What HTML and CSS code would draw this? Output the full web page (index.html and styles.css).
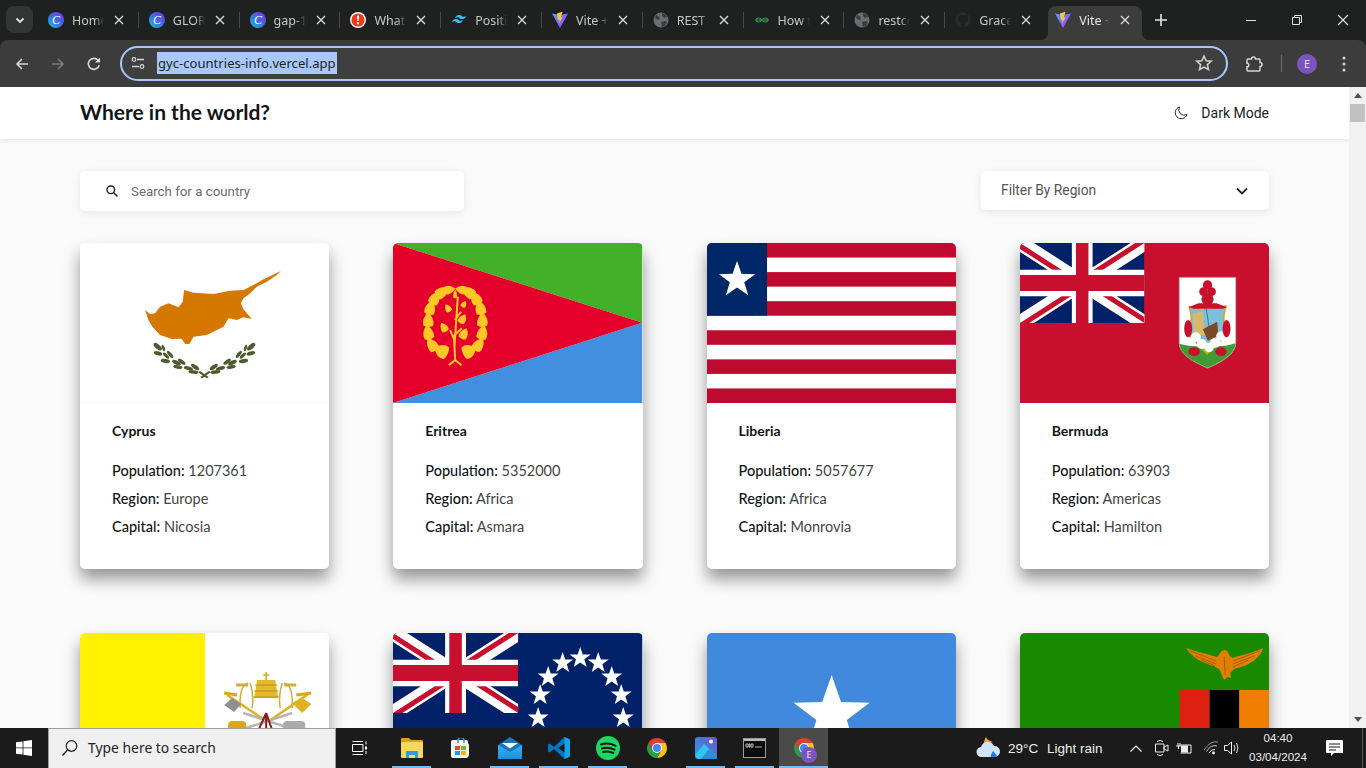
FILE: index.html
```html
<!DOCTYPE html>
<html lang="en">

  <head>
    <meta charset="UTF-8">
    <meta name="viewport" content="width=device-width, initial-scale=1.0">
    <title>Where in the world?</title>
    <link rel="stylesheet" href="styles.css">
  </head>

  <body>
    <svg class="icon-defs" aria-hidden="true">
      <defs>
        <linearGradient id="canvaFill" x1="0" y1="1" x2="1" y2="0">
          <stop offset="0" stop-color="#18c4d8" />
          <stop offset="0.5" stop-color="#3d6ee6" />
          <stop offset="1" stop-color="#7d2ae8" />
        </linearGradient>
        <linearGradient id="viteFill" x1="0" y1="0" x2="1" y2="1">
          <stop offset="0" stop-color="#41a5ff" />
          <stop offset="1" stop-color="#bd34fe" />
        </linearGradient>
        <linearGradient id="bluefold" x1="0" y1="0" x2="0" y2="1">
          <stop offset="0" stop-color="#35b5f5" />
          <stop offset="1" stop-color="#1a8fe3" />
        </linearGradient>
        <linearGradient id="photoFill" x1="0" y1="1" x2="1" y2="0">
          <stop offset="0" stop-color="#2f9fe8" />
          <stop offset="1" stop-color="#6a55c8" />
        </linearGradient>
        <clipPath id="jackClip">
          <path d="M30 15h30v15zv15H0zH0V0zV0h30z" />
        </clipPath>
        <symbol id="canva" viewBox="0 0 16 16">
          <circle cx="8" cy="8" r="8" fill="url(#canvaFill)" />
          <text x="8" y="12" text-anchor="middle" class="canva-letter">C</text>
        </symbol>
        <symbol id="vite" viewBox="0 0 16 16">
          <path d="M0 1.500 8 3l8-1.500-8 14.500z" fill="url(#viteFill)" />
          <path d="M9.500 0 5 1.500l.8 6.500 1.700-.5-.3 3.500 3.300-5.500-1.800.3L10.500 0z" fill="#ffc925" />
        </symbol>
        <symbol id="globe" viewBox="0 0 16 16">
          <circle cx="8" cy="8" r="7.500" fill="#6a6e73" />
          <path d="M3 3l3 1.500 1 2.500-2 1-3-2zM9 1l4 1.500 1 2.500-3 1-2-2zM8 10l4-1 2 1-2 4-3 1z" fill="#3a3c3f" />
        </symbol>
        <symbol id="close" viewBox="0 0 10 10">
          <path d="M1 1l8 8M9 1 1 9" stroke="#d8d8d8" stroke-width="1.400" fill="none" />
        </symbol>
        <symbol id="jack" viewBox="0 0 60 30" preserveAspectRatio="none">
          <rect width="60" height="30" fill="#012169" />
          <path d="M0 0 60 30M60 0 0 30" stroke="#fff" stroke-width="6" />
          <path d="M0 0 60 30M60 0 0 30" clip-path="url(#jackClip)" stroke="#c8102e" stroke-width="4" />
          <path d="M30 0v30M0 15h60" stroke="#fff" stroke-width="10" />
          <path d="M30 0v30M0 15h60" stroke="#c8102e" stroke-width="6" />
        </symbol>
        <symbol id="chrome" viewBox="0 0 24 24">
          <path d="M3.340 7A10 10 0 0 1 20.660 7H12L7.670 14.500z" fill="#e33b2e" />
          <path d="M20.660 7A10 10 0 0 1 12 22l4.330-7.500L12 7z" fill="#fbc116" />
          <path d="M12 22A10 10 0 0 1 3.340 7l4.330 7.500 8.660 0z" fill="#2a9d47" />
          <circle cx="12" cy="12" r="5" fill="#fff" />
          <circle cx="12" cy="12" r="4" fill="#4487f0" />
        </symbol>
        <polygon id="star" points="0,-10 2.350,-3.240 9.510,-3.090 3.800,1.240 5.880,8.090 0,4 -5.880,8.090 -3.800,1.240 -9.510,-3.090 -2.350,-3.240" fill="#fff" />
        <path id="wreathLeaf" d="M0-28Q20-10 15 12 0 20-15 12-20-10 0-28z" fill="#ffc726" />
      </defs>
    </svg>

    <div class="tabstrip">
      <button class="tab-search">
        <svg width="12" height="12" viewBox="0 0 12 12"><path d="M2.500 4.500 6 8l3.500-3.500" stroke="#e3e3e3" stroke-width="1.800" fill="none" /></svg>
      </button>
      <div class="tab">
        <svg class="fav"><use href="#canva" /></svg>
        <span class="tab-title">Home</span>
        <svg class="tab-close"><use href="#close" /></svg>
      </div>
      <span class="tab-sep"></span>
      <div class="tab">
        <svg class="fav"><use href="#canva" /></svg>
        <span class="tab-title">GLORY</span>
        <svg class="tab-close"><use href="#close" /></svg>
      </div>
      <span class="tab-sep"></span>
      <div class="tab">
        <svg class="fav"><use href="#canva" /></svg>
        <span class="tab-title">gap-1</span>
        <svg class="tab-close"><use href="#close" /></svg>
      </div>
      <span class="tab-sep"></span>
      <div class="tab">
        <svg class="fav" viewBox="0 0 16 16">
          <circle cx="8" cy="8" r="8" fill="#fff" />
          <circle cx="8" cy="8" r="6.600" fill="#f03a17" />
          <path d="M7 3.500h2l-.3 5.500H7.300zM7 10.300h2v2H7z" fill="#fff" />
        </svg>
        <span class="tab-title">Whats</span>
        <svg class="tab-close"><use href="#close" /></svg>
      </div>
      <span class="tab-sep"></span>
      <div class="tab">
        <svg class="fav" viewBox="0 0 16 16">
          <path d="M4 6.500C5 3.500 6.700 2.500 9 3c1.500.3 2 1.500 3.200 1.800 1 .2 2-.2 3-1.300-1 3-2.700 4-5 3.500C8.700 6.700 8.200 5.500 7 5.200c-1-.2-2 .2-3 1.300zM.8 10.500c1-3 2.700-4 5-3.500 1.500.3 2 1.500 3.200 1.800 1 .2 2-.2 3-1.300-1 3-2.700 4-5 3.500-1.500-.3-2-1.500-3.200-1.800-1-.2-2 .2-3 1.300z" fill="#38bdf8" />
        </svg>
        <span class="tab-title">Position</span>
        <svg class="tab-close"><use href="#close" /></svg>
      </div>
      <span class="tab-sep"></span>
      <div class="tab">
        <svg class="fav"><use href="#vite" /></svg>
        <span class="tab-title">Vite + React</span>
        <svg class="tab-close"><use href="#close" /></svg>
      </div>
      <span class="tab-sep"></span>
      <div class="tab">
        <svg class="fav"><use href="#globe" /></svg>
        <span class="tab-title">REST Countries</span>
        <svg class="tab-close"><use href="#close" /></svg>
      </div>
      <span class="tab-sep"></span>
      <div class="tab">
        <svg class="fav" viewBox="0 0 16 16">
          <path d="M1 8h14M2 8c.5-2 3-2.600 4.500-1.300L8 8l1.500-1.300C11 5.400 13.500 6 14 8c-.5 2-3 2.600-4.500 1.300L8 8 6.500 9.300C5 10.600 2.500 10 2 8z" stroke="#2f8d46" stroke-width="1.100" fill="none" />
        </svg>
        <span class="tab-title">How to</span>
        <svg class="tab-close"><use href="#close" /></svg>
      </div>
      <span class="tab-sep"></span>
      <div class="tab">
        <svg class="fav"><use href="#globe" /></svg>
        <span class="tab-title">restcountries</span>
        <svg class="tab-close"><use href="#close" /></svg>
      </div>
      <span class="tab-sep"></span>
      <div class="tab">
        <svg class="fav" viewBox="0 0 16 16">
          <path d="M8 .5a7.500 7.500 0 0 0-2.400 14.600c.4.100.5-.2.500-.4v-1.400c-2 .4-2.500-.9-2.600-1.300-.1-.2-.5-.9-.8-1-.3-.2-.7-.6 0-.6.600 0 1.100.6 1.200.8.700 1.200 1.900.9 2.300.7.100-.5.300-.9.500-1.100-1.800-.2-3.600-.9-3.600-4 0-.9.300-1.600.8-2.100-.1-.2-.3-1 .1-2.100 0 0 .7-.2 2.200.8a7.500 7.500 0 0 1 4 0c1.500-1 2.200-.8 2.200-.8.400 1.100.2 1.900.1 2.100.5.500.8 1.200.8 2.100 0 3.100-1.900 3.800-3.600 4 .3.300.5.700.5 1.500v2.200c0 .2.100.5.500.4A7.500 7.500 0 0 0 8 .5z" fill="#2a2e33" />
        </svg>
        <span class="tab-title">Grace</span>
        <svg class="tab-close"><use href="#close" /></svg>
      </div>
      <div class="tab tab-active">
        <svg class="fav"><use href="#vite" /></svg>
        <span class="tab-title">Vite + React</span>
        <svg class="tab-close"><use href="#close" /></svg>
      </div>
      <svg class="tab-new" width="14" height="14" viewBox="0 0 14 14"><path d="M7 1v12M1 7h12" stroke="#e3e3e3" stroke-width="1.600" /></svg>
      <div class="win-controls">
        <span class="win-btn"><svg width="12" height="12" viewBox="0 0 12 12"><path d="M1 6.500h10" stroke="#e3e3e3" /></svg></span>
        <span class="win-btn"><svg width="12" height="12" viewBox="0 0 12 12"><path d="M1.500 3.500h7v7h-7zM3.500 3.500v-2h7v7h-2" stroke="#e3e3e3" fill="none" /></svg></span>
        <span class="win-btn"><svg width="12" height="12" viewBox="0 0 12 12"><path d="M1 1l10 10M11 1 1 11" stroke="#e3e3e3" stroke-width="1.100" /></svg></span>
      </div>
    </div>

    <div class="toolbar">
      <span class="tool-btn">
        <svg width="16" height="16" viewBox="0 0 16 16"><path d="M14 8H3M8 3 3 8l5 5" stroke="#d6d6d6" stroke-width="1.600" fill="none" /></svg>
      </span>
      <span class="tool-btn">
        <svg width="16" height="16" viewBox="0 0 16 16"><path d="M2 8h11M8 3l5 5-5 5" stroke="#7b7b7b" stroke-width="1.600" fill="none" /></svg>
      </span>
      <span class="tool-btn">
        <svg width="16" height="16" viewBox="0 0 16 16"><path d="M13.200 9.200A5.500 5.500 0 1 1 12 4.200L13.500 5.600" stroke="#d6d6d6" stroke-width="1.600" fill="none" /><path d="M14 1.500v5H9z" fill="#d6d6d6" /></svg>
      </span>
      <div class="omnibox">
        <svg class="tune-icon" width="14" height="14" viewBox="0 0 14 14">
          <path d="M6 3.500h7M1 10.500h7" stroke="#d6d6d6" stroke-width="1.300" />
          <circle cx="3" cy="3.500" r="1.800" stroke="#d6d6d6" stroke-width="1.200" fill="none" />
          <circle cx="11" cy="10.500" r="1.800" stroke="#d6d6d6" stroke-width="1.200" fill="none" />
        </svg>
        <span class="url-selected">gyc-countries-info.vercel.app</span>
        <svg class="star-icon" width="18" height="18" viewBox="0 0 18 18"><path d="M9 2l2.100 4.700 5.100.5-3.800 3.400 1.100 5L9 13l-4.500 2.600 1.100-5-3.800-3.400 5.100-.5z" stroke="#d6d6d6" stroke-width="1.500" fill="none" /></svg>
      </div>
      <span class="tool-btn ext-btn">
        <svg width="18" height="18" viewBox="0 0 18 18"><path d="M3 4h3.500a2 2 0 0 1 4 0H14a1 1 0 0 1 1 1v2.500a2 2 0 0 1 0 4V15a1 1 0 0 1-1 1H3a1 1 0 0 1-1-1v-3.200a1.800 1.800 0 0 0 0-3.600V5a1 1 0 0 1 1-1z" stroke="#d6d6d6" stroke-width="1.500" fill="none" /></svg>
      </span>
      <span class="tool-divider"></span>
      <span class="tool-btn avatar-btn"><span class="avatar">E</span></span>
      <span class="tool-btn menu-btn">
        <svg width="4" height="16" viewBox="0 0 4 16"><circle cx="2" cy="2" r="1.500" fill="#d6d6d6" /><circle cx="2" cy="8" r="1.500" fill="#d6d6d6" /><circle cx="2" cy="14" r="1.500" fill="#d6d6d6" /></svg>
      </span>
    </div>

    <div class="viewport">
      <div class="page">
        <header class="site-header">
          <h1>Where in the world?</h1>
          <div class="theme-toggle">
            <svg width="14" height="14" viewBox="0 0 14 14"><path d="M5.500 1a6 6 0 1 0 7.500 7.500A5.500 5.500 0 0 1 5.500 1z" stroke="#222" stroke-width="1" fill="none" /></svg>
            <span>Dark Mode</span>
          </div>
        </header>

        <main class="content">
          <div class="controls">
            <div class="search">
              <svg width="14" height="14" viewBox="0 0 14 14"><circle cx="5.800" cy="5.800" r="3.800" stroke="#222" stroke-width="1.400" fill="none" /><path d="M8.700 8.700 12.500 12.500" stroke="#222" stroke-width="1.500" /></svg>
              <span>Search for a country</span>
            </div>
            <div class="filter">
              <span>Filter By Region</span>
              <svg width="12" height="8" viewBox="0 0 12 8"><path d="M1 1.500 6 6.500l5-5" stroke="#222" stroke-width="1.800" fill="none" /></svg>
            </div>
          </div>

          <div class="country-grid">
            <article class="card">
              <svg class="flag" viewBox="0 9 747 480" preserveAspectRatio="none">
                <rect y="9" width="747" height="480" fill="#fff" />
                <rect y="486" width="747" height="3" fill="#fafafa" />
                <path d="M195 210 210 222 225 220 240 200 265 190 295 202 308 185 312 150 340 158 400 162 450 152 490 150 520 135 550 118 602 93 590 105 560 125 530 140 510 160 490 175 482 190 490 208 515 237 490 232 470 240 445 235 430 260 380 285 340 290 328 312 315 312 305 296 275 297 240 285 218 262 205 240z" fill="#d57800" />
                <g id="wreathLeft" fill="#4e5b31">
                  <ellipse cx="233" cy="320" rx="15" ry="7" transform="rotate(40 233 320)" />
                  <ellipse cx="234" cy="340" rx="13" ry="6" transform="rotate(15 234 340)" />
                  <ellipse cx="250" cy="324" rx="10" ry="4" transform="rotate(70 250 324)" />
                  <ellipse cx="258" cy="347" rx="12" ry="5" transform="rotate(45 258 347)" />
                  <ellipse cx="270" cy="343" rx="13" ry="5" transform="rotate(50 270 343)" />
                  <ellipse cx="256" cy="363" rx="14" ry="6" transform="rotate(10 256 363)" />
                  <ellipse cx="289" cy="368" rx="14" ry="6" transform="rotate(25 289 368)" />
                  <ellipse cx="305" cy="365" rx="13" ry="5.500" transform="rotate(35 305 365)" />
                  <ellipse cx="293" cy="381" rx="14" ry="5.500" transform="rotate(8 293 381)" />
                  <ellipse cx="325" cy="385" rx="14" ry="5.500" transform="rotate(15 325 385)" />
                  <ellipse cx="345" cy="381" rx="14" ry="6" transform="rotate(35 345 381)" />
                  <ellipse cx="340" cy="396" rx="15" ry="5.500" transform="rotate(5 340 396)" />
                  <path d="M360 393 386 412 380 415 354 397z" />
                </g>
                <use href="#wreathLeft" transform="translate(746 0) scale(-1 1)" />
              </svg>
              <div class="card-body">
                <h2>Cyprus</h2>
                <p><b>Population:</b> 1207361</p>
                <p><b>Region:</b> Europe</p>
                <p><b>Capital:</b> Nicosia</p>
              </div>
            </article>

            <article class="card">
              <svg class="flag" viewBox="0 9 750 480" preserveAspectRatio="none">
                <path d="M0 9H750V248z" fill="#43b02a" />
                <path d="M0 489H750V248z" fill="#418fde" />
                <path d="M0 9 750 248 0 489z" fill="#e4002b" />
                <g id="eritreaWreath">
                  <use href="#wreathLeaf" transform="translate(150 335) rotate(-65) scale(1.300 1)" />
                  <use href="#wreathLeaf" transform="translate(120 318) rotate(-36)" />
                  <use href="#wreathLeaf" transform="translate(107 283) rotate(-14)" />
                  <use href="#wreathLeaf" transform="translate(106 245) rotate(-2)" />
                  <use href="#wreathLeaf" transform="translate(111 209) rotate(12)" />
                  <use href="#wreathLeaf" transform="translate(124 179) rotate(28)" />
                  <use href="#wreathLeaf" transform="translate(144 159) rotate(52)" />
                  <use href="#wreathLeaf" transform="translate(166 150) rotate(78) scale(.8)" />
                </g>
                <use href="#eritreaWreath" transform="translate(375 0) scale(-1 1)" />
                <g fill="none" stroke="#ffc726">
                  <path d="M187 360 184 300 172 270M185 320 195 170M186 240 205 215M180 290 207 265" stroke-width="6" />
                  <path d="M168 376 187 360 206 376" stroke-width="6" />
                </g>
                <use href="#wreathLeaf" transform="translate(167 207) rotate(-30) scale(.6)" />
                <use href="#wreathLeaf" transform="translate(212 195) rotate(30) scale(.5)" />
                <use href="#wreathLeaf" transform="translate(208 240) rotate(30) scale(.7)" />
                <use href="#wreathLeaf" transform="translate(155 265) rotate(-30) scale(.7)" />
                <use href="#wreathLeaf" transform="translate(212 285) rotate(25) scale(.8)" />
                <use href="#wreathLeaf" transform="translate(187 165) scale(.4 .6)" />
              </svg>
              <div class="card-body">
                <h2>Eritrea</h2>
                <p><b>Population:</b> 5352000</p>
                <p><b>Region:</b> Africa</p>
                <p><b>Capital:</b> Asmara</p>
              </div>
            </article>

            <article class="card">
              <svg class="flag" viewBox="0 0 249 160" preserveAspectRatio="none">
                <rect width="249" height="160" fill="#fff" />
                <g fill="#bf0a30">
                  <rect width="249" height="14.550" />
                  <rect y="29.090" width="249" height="14.550" />
                  <rect y="58.180" width="249" height="14.550" />
                  <rect y="87.270" width="249" height="14.550" />
                  <rect y="116.360" width="249" height="14.550" />
                  <rect y="145.450" width="249" height="14.550" />
                </g>
                <rect width="60" height="72.700" fill="#002868" />
                <use href="#star" transform="translate(30 37) scale(1.900)" />
              </svg>
              <div class="card-body">
                <h2>Liberia</h2>
                <p><b>Population:</b> 5057677</p>
                <p><b>Region:</b> Africa</p>
                <p><b>Capital:</b> Monrovia</p>
              </div>
            </article>

            <article class="card">
              <svg class="flag" viewBox="15 9 747 480" preserveAspectRatio="none">
                <rect x="15" y="9" width="747" height="480" fill="#c8102e" />
                <use href="#jack" x="15" y="9" width="373" height="240" />
                <path d="M492 112H662V310Q662 350 577 385 492 350 492 310z" fill="#fff" stroke="#8a8a7a" stroke-width="2" />
                <path d="M494 312Q530 322 577 318 630 322 660 310 660 350 577 383 494 350 494 312z" fill="#3f9c35" />
                <g fill="#c8102e">
                  <circle cx="577" cy="135" r="14" />
                  <circle cx="565" cy="155" r="13" />
                  <circle cx="589" cy="155" r="13" />
                  <circle cx="577" cy="178" r="18" />
                </g>
                <path d="M522 200Q577 218 632 198L626 228 628 290 576 342 526 290 528 228z" fill="#7cc0dc" stroke="#d4a800" stroke-width="4" />
                <path d="M532 222 562 214 570 285 538 285z" fill="#d9b86a" />
                <path d="M563 268 606 245 610 288 578 302z" fill="#7a4a25" />
                <path d="M572 200 582 262" stroke="#444" stroke-width="2" />
                <g fill="#fff">
                  <circle cx="542" cy="292" r="15" />
                  <circle cx="560" cy="312" r="15" />
                  <circle cx="582" cy="322" r="14" />
                  <circle cx="600" cy="308" r="15" />
                  <circle cx="617" cy="288" r="14" />
                </g>
                <g fill="#c8102e">
                  <ellipse cx="519" cy="266" rx="12" ry="26" />
                  <ellipse cx="634" cy="266" rx="12" ry="26" />
                  <ellipse cx="537" cy="335" rx="17" ry="13" />
                  <ellipse cx="617" cy="335" rx="17" ry="13" />
                  <path d="M520 202 550 190 604 190 636 202 622 206H535z" />
                </g>
              </svg>
              <div class="card-body">
                <h2>Bermuda</h2>
                <p><b>Population:</b> 63903</p>
                <p><b>Region:</b> Americas</p>
                <p><b>Capital:</b> Hamilton</p>
              </div>
            </article>

            <article class="card">
              <svg class="flag" viewBox="0 0 249 160" preserveAspectRatio="none">
                <rect width="125" height="160" fill="#fff100" />
                <rect x="125" width="124" height="160" fill="#fff" />
                <path d="M177 47h18l3 18h-24z" fill="#e4b82a" />
                <path d="M175 52h22M174 58h24M173 64h26" stroke="#b98f16" stroke-width="1.200" />
                <path d="M186 39v8M183 42h6" stroke="#d8a818" stroke-width="1.600" />
                <path d="M168 50q-9 2-8 25M204 50q9 2 8 25M170 50q4 12 2 25M202 50q-4 12-2 25" stroke="#d0ad3a" stroke-width="1.500" fill="none" />
                <path d="M156 52h12M204 52h12" stroke="#d0ad3a" stroke-width="3" />
                <path d="M147 62 186 88M228 61 189 88" stroke="#e0b020" stroke-width="2.500" />
                <path d="M144 60 157 62M231 60 216 62" stroke="#d8a818" stroke-width="3" />
                <path d="M144 72l8-7 9 6-7 8z" fill="#8f8f8f" />
                <path d="M212 70l10-5 9 6-9 9z" fill="#e0b020" />
                <path d="M163 80 212 96M212 80 163 96" stroke="#b5b5b5" stroke-width="2.500" />
                <path d="M186 80 177 100M186 80v20M186 80 193 100" stroke="#8b1a1a" stroke-width="2" />
                <rect x="148" y="88" width="18" height="12" rx="4" fill="#d8a818" />
                <rect x="203" y="88" width="22" height="12" rx="4" fill="#aaa" />
              </svg>
              <div class="card-body">
                <h2>Vatican City</h2>
                <p><b>Population:</b> 451</p>
                <p><b>Region:</b> Europe</p>
                <p><b>Capital:</b> Vatican City</p>
              </div>
            </article>

            <article class="card">
              <svg class="flag" viewBox="0 0 249 160" preserveAspectRatio="none">
                <rect width="249" height="160" fill="#012169" />
                <use href="#jack" width="125" height="80" />
                <g>
                  <use href="#star" transform="translate(187 25) scale(1.100)" />
                  <use href="#star" transform="translate(169.500 30) scale(1.100)" />
                  <use href="#star" transform="translate(205 30) scale(1.100)" />
                  <use href="#star" transform="translate(155 44) scale(1.100)" />
                  <use href="#star" transform="translate(218.500 44) scale(1.100)" />
                  <use href="#star" transform="translate(147 62) scale(1.100)" />
                  <use href="#star" transform="translate(228 62) scale(1.100)" />
                  <use href="#star" transform="translate(145 85) scale(1.100)" />
                  <use href="#star" transform="translate(230 85) scale(1.100)" />
                </g>
              </svg>
              <div class="card-body">
                <h2>Cook Islands</h2>
                <p><b>Population:</b> 18100</p>
                <p><b>Region:</b> Oceania</p>
                <p><b>Capital:</b> Avarua</p>
              </div>
            </article>

            <article class="card">
              <svg class="flag" viewBox="0 0 249 160" preserveAspectRatio="none">
                <rect width="249" height="160" fill="#4189dd" />
                <use href="#star" transform="translate(124.500 82) scale(4)" />
              </svg>
              <div class="card-body">
                <h2>Somalia</h2>
                <p><b>Population:</b> 15893219</p>
                <p><b>Region:</b> Africa</p>
                <p><b>Capital:</b> Mogadishu</p>
              </div>
            </article>

            <article class="card">
              <svg class="flag" viewBox="0 0 249 160" preserveAspectRatio="none">
                <rect width="249" height="160" fill="#198a00" />
                <rect x="159.500" y="57" width="30" height="103" fill="#de2010" />
                <rect x="189.500" y="57" width="29.500" height="103" />
                <rect x="219" y="57" width="30" height="103" fill="#ef7d00" />
                <path d="M166 15C175 18 190 22 197 24L200 20Q203 15 207 18L209 22 212 25C222 22 235 19 243 15 240 24 233 29 224 33L214 36 210 40 211 45 207 44 204 47 202 43 199 36 193 33C183 30 172 25 166 15z" fill="#e07f00" />
                <path d="M170 18 196 28M175 23 196 31M181 27 195 33M239 18 213 28M234 23 213 31M228 27 213 34M204 24 205 42" stroke="#8f5200" stroke-width=".7" fill="none" />
              </svg>
              <div class="card-body">
                <h2>Zambia</h2>
                <p><b>Population:</b> 18383956</p>
                <p><b>Region:</b> Africa</p>
                <p><b>Capital:</b> Lusaka</p>
              </div>
            </article>
          </div>
        </main>
      </div>

      <div class="scrollbar">
        <span class="arrow-up"></span>
        <span class="scroll-thumb"></span>
        <span class="arrow-down"></span>
      </div>
    </div>

    <footer class="taskbar">
      <span class="start">
        <svg width="16" height="16" viewBox="0 0 16 16"><path d="M0 2.300 6.600 1.400V7.500H0zM7.400 1.300 16 0V7.500H7.400zM0 8.300H6.600V14.600L0 13.700zM7.400 8.300H16V16L7.400 14.700z" fill="#fff" /></svg>
      </span>
      <div class="task-search">
        <svg width="18" height="18" viewBox="0 0 18 18"><circle cx="10.500" cy="7" r="5.300" stroke="#222" stroke-width="1.200" fill="none" /><path d="M6.700 10.800 1.500 16.500" stroke="#222" stroke-width="1.300" /></svg>
        <span>Type here to search</span>
      </div>
      <span class="task-view">
        <svg width="16" height="16" viewBox="0 0 16 16"><path d="M.5 4.500h10.500v7H.5zM.5 1.500h10.500M.5 14.500h10.500M14 1.500v3M14 11v3" stroke="#fff" fill="none" /><rect x="13" y="6.500" width="2" height="3" fill="#fff" /></svg>
      </span>
      <span class="task-app running">
        <svg width="22" height="20" viewBox="0 0 22 20">
          <path d="M0 1a1 1 0 0 1 1-1h7l2 2h11a1 1 0 0 1 1 1v2H0z" fill="#e0a020" />
          <rect y="4" width="22" height="16" rx="1" fill="#fbd661" />
          <path d="M5 13h12v7h-3v-3H8v3H5z" fill="#2f9be4" />
        </svg>
      </span>
      <span class="task-app">
        <svg width="20" height="20" viewBox="0 0 20 20">
          <rect y="2" width="17" height="18" rx="2" fill="#fff" />
          <rect x="2" y="5" width="16" height="14" rx="2" fill="#f2f2f2" />
          <rect x="4" y="8" width="5" height="4" fill="#e84a27" />
          <rect x="10" y="8" width="5" height="4" fill="#79b83a" />
          <rect x="4" y="13" width="5" height="4" fill="#1f98e8" />
          <rect x="10" y="13" width="5" height="4" fill="#f7b500" />
          <path d="M7 5V2.500a3 3 0 0 1 6 0V5" stroke="#1f98e8" stroke-width="1.500" fill="none" />
        </svg>
      </span>
      <span class="task-app running">
        <svg width="24" height="22" viewBox="0 0 24 22">
          <path d="M12 0 24 8v14H0V8z" fill="#1773c4" />
          <path d="M4 6H20L12 11.500z" fill="#fff" />
          <path d="M0 8 12 15 24 8v14H0z" fill="url(#bluefold)" />
        </svg>
      </span>
      <span class="task-app running">
        <svg width="24" height="24" viewBox="0 0 24 24">
          <path d="M17.500 1 7 11 2.500 7.500 1 8.500v7L2.500 16.500 7 13l10.500 10L23 20.500v-17z" fill="#0078c4" />
          <path d="M17.500 1 23 3.500v17L17.500 23z" fill="#1fa0ea" />
          <path d="M17.500 7.500 11 12l6.500 4.500z" fill="#1b1b1b" />
        </svg>
      </span>
      <span class="task-app running">
        <svg width="24" height="24" viewBox="0 0 24 24">
          <circle cx="12" cy="12" r="12" fill="#1ed760" />
          <path d="M5 8.500c5-1.500 10-1 14.500 1.300M6 12.500c4.500-1.200 8.500-.8 12.500 1.200M7 16c3.500-.9 7-.6 10.300 1" stroke="#151515" stroke-width="2" stroke-linecap="round" fill="none" />
        </svg>
      </span>
      <span class="task-app">
        <svg width="24" height="24" viewBox="0 0 24 24"><use href="#chrome" /></svg>
      </span>
      <span class="task-app running">
        <svg width="22" height="22" viewBox="0 0 22 22">
          <rect width="22" height="22" rx="3" fill="url(#photoFill)" />
          <circle cx="16" cy="4.500" r="2" fill="#fff" />
          <path d="M0 18 9 7l13 12v1a2 2 0 0 1-2 2H3z" fill="#2fc5ee" />
          <path d="M6 22 14 12l8 7v1a2 2 0 0 1-2 2z" fill="#2a8fd8" />
        </svg>
      </span>
      <span class="task-app running">
        <svg width="23" height="20" viewBox="0 0 23 20">
          <rect x=".5" y=".5" width="22" height="19" fill="#0c0c0c" stroke="#9c9c9c" />
          <rect x="1" y="1" width="21" height="2" fill="#bcbcbc" />
          <path d="M3 6h2v3H3zM6 6h1v3H6zM8 6h2v3H8zM12 9h7" stroke="#d8d8d8" stroke-width=".8" fill="none" />
        </svg>
      </span>
      <span class="task-app running-active">
        <svg width="24" height="24" viewBox="0 0 24 24"><use href="#chrome" /></svg>
        <span class="profile-badge">E</span>
      </span>

      <div class="tray">
        <svg class="tray-weather" width="25" height="24" viewBox="0 0 25 24">
          <path d="M7 10C8 7 8 4 10 1c1 3 4 4 7 5-4 1-6 2-7 6z" fill="#f2a23a" />
          <path d="M6 21a5 5 0 0 1-1-10 7 7 0 0 1 13-1 5.500 5.500 0 0 1 1 11z" fill="#cfe4fb" />
          <path d="M17 15c2 2 4 4 4 6h-6c-1-2 1-4 2-6z" fill="#1f7fe0" />
        </svg>
        <span class="tray-temp">29°C</span>
        <span class="tray-weather-text">Light rain</span>
        <svg class="tray-caret" width="12" height="7" viewBox="0 0 12 7"><path d="M.5 6.500 6 1l5.500 5.500" stroke="#fff" stroke-width="1.100" fill="none" /></svg>
        <svg class="tray-icon tray-cam" width="14" height="18" viewBox="0 0 14 18"><path d="M.5 5h8.500v8H.5zM9 8l4-2v6l-4-2z" stroke="#eee" fill="none" /><path d="M2 2.500Q5 .5 8 2.500M2 15.500Q5 17.500 8 15.500" stroke="#eee" fill="none" /></svg>
        <svg class="tray-icon tray-batt" width="16" height="12" viewBox="0 0 16 12"><path d="M4.500 3h10.500v8H4.500" stroke="#eee" fill="none" /><rect x="5" y="3.500" width="7" height="7" fill="#eee" /><path d="M0 4h5M2 1v3M4 1v3M2.500 4v3" stroke="#eee" /></svg>
        <svg class="tray-icon tray-wifi" width="16" height="14" viewBox="0 0 16 14"><path d="M1 9Q8-1 15 1" stroke="#999" fill="none" /><path d="M3.500 10.500Q8 3 14 5" stroke="#ccc" fill="none" /><path d="M6 12Q8 8 12 8.500" stroke="#eee" fill="none" /><circle cx="10.500" cy="12" r="1.400" fill="#fff" /></svg>
        <svg class="tray-icon tray-sound" width="17" height="14" viewBox="0 0 17 14"><path d="M.5 4.500h3L7.500 1v12l-4-3.500h-3z" stroke="#eee" fill="none" /><path d="M10 4Q12 7 10 10M12.500 2Q15.500 7 12.500 12" stroke="#ddd" fill="none" /></svg>
        <div class="tray-clock">
          <span>04:40</span>
          <span>03/04/2024</span>
        </div>
        <svg class="tray-notify" width="18" height="17" viewBox="0 0 18 17">
          <path d="M1 0h15a1 1 0 0 1 1 1v12H8l-3 3v-3H1a1 1 0 0 1-1-1V1a1 1 0 0 1 1-1z" fill="#fff" />
          <path d="M3 4h11M3 7h11M3 10h7" stroke="#1b1b1b" />
        </svg>
        <span class="show-desktop"></span>
      </div>
    </footer>
  </body>

</html>
```

FILE: styles.css
```css
* {
  box-sizing: border-box;
}

html,
body {
  height: 100%;
}

body {
  margin: 0;
  width: 1366px;
  height: 768px;
  display: flex;
  flex-direction: column;
  overflow: hidden;
  font-family: "Noto Sans", Arial, sans-serif;
  background-color: #1f2121;
}

.icon-defs {
  display: block;
  width: 0;
  height: 0;
  flex: none;
}

.canva-letter {
  font-family: "Liberation Serif", serif;
  font-style: italic;
  font-size: 12px;
  fill: white;
}

/* browser tabs */
.tabstrip {
  height: 40px;
  flex: none;
  display: flex;
  align-items: flex-end;
  background-color: #1f2121;
}

.tab-search {
  width: 27px;
  height: 27px;
  margin: 0 5px 7px 6px;
  padding: 0;
  border: none;
  border-radius: 8px;
  background-color: #343535;
  display: flex;
  align-items: center;
  justify-content: center;
}

.tab {
  width: 99.800px;
  height: 34px;
  padding: 0 0 6px 10px;
  flex: none;
  display: flex;
  align-items: center;
  position: relative;
}

.fav {
  width: 16px;
  height: 16px;
  flex: none;
}

.tab-title {
  width: 32px;
  margin-left: 8px;
  flex: none;
  overflow: hidden;
  white-space: nowrap;
  font-size: 12.500px;
  color: #c7c7c7;
  -webkit-mask-image: linear-gradient(to right, black 70%, transparent);
  mask-image: linear-gradient(to right, black 70%, transparent);
}

.tab-close {
  width: 10px;
  height: 10px;
  margin-left: 10px;
  flex: none;
}

.tab-sep {
  width: 1px;
  height: 16px;
  margin-bottom: 12px;
  flex: none;
  background-color: #4a4b4b;
}

.tab-active {
  width: 94px;
  margin-left: 2.700px;
  padding-left: 7.500px;
  border-radius: 8px 8px 0 0;
  background-color: #3c3c3c;
}

.tab-active::before,
.tab-active::after {
  content: "";
  position: absolute;
  bottom: 0;
  width: 8px;
  height: 8px;
}

.tab-active::before {
  left: -8px;
  background: radial-gradient(circle at 0 0, transparent 8px, #3c3c3c 8.500px);
}

.tab-active::after {
  right: -8px;
  background: radial-gradient(circle at 100% 0, transparent 8px, #3c3c3c 8.500px);
}

.tab-active .tab-title {
  width: 30px;
  color: #e3e3e3;
}

.tab-active .tab-close {
  margin-left: 11px;
}

.tab-new {
  margin-left: 12px;
  margin-bottom: 13px;
}

.win-controls {
  margin-left: auto;
  display: flex;
}

.win-btn {
  width: 46px;
  height: 40px;
  display: flex;
  align-items: center;
  justify-content: center;
}

/* address bar */
.toolbar {
  height: 47px;
  flex: none;
  padding-left: 4px;
  display: flex;
  align-items: center;
  border-radius: 8px 8px 0 0;
  background-color: #3c3c3c;
}

.tool-btn {
  width: 36px;
  height: 36px;
  flex: none;
  display: flex;
  align-items: center;
  justify-content: center;
}

.omnibox {
  width: 1108px;
  height: 35px;
  margin-left: 8px;
  margin-top: -1px;
  padding: 0 13px 0 9px;
  flex: none;
  display: flex;
  align-items: center;
  border: 2px solid #a8c7fa;
  border-radius: 18px;
  background-color: #3f3f3f;
}

.tune-icon {
  flex: none;
}

.url-selected {
  height: 22px;
  margin-left: 12px;
  padding: 0 1px;
  line-height: 22px;
  font-size: 13.100px;
  color: #1f1f1f;
  background-color: #a8c7fa;
}

.star-icon {
  margin-left: auto;
}

.ext-btn {
  margin-left: 8px;
}

.tool-divider {
  width: 1px;
  height: 17px;
  margin: 0 7px 0 9px;
  background-color: #6e6e6e;
}

.avatar {
  width: 20px;
  height: 20px;
  border-radius: 50%;
  text-align: center;
  line-height: 20px;
  font-size: 11px;
  color: #e8e0f5;
  background-color: #7b54c0;
}

.menu-btn {
  margin-left: 1px;
}

/* the page itself */
.viewport {
  height: 641px;
  flex: none;
  display: flex;
}

.page {
  width: 1349px;
  overflow: hidden;
  background-color: #fafafa;
  font-family: Lato, "Noto Sans", sans-serif;
}

.site-header {
  height: 52px;
  padding: 0 80px;
  display: flex;
  align-items: center;
  justify-content: space-between;
  background-color: white;
  box-shadow: 0 2px 4px rgba(0, 0, 0, 0.08);
}

.site-header h1 {
  margin: 0 0 4px;
  font-size: 21px;
  font-weight: 700;
  color: #111517;
}

.theme-toggle {
  display: flex;
  align-items: center;
  gap: 13px;
  font-family: Roboto, sans-serif;
  font-size: 14px;
  color: #222;
}

.content {
  padding: 32px 80px;
}

.controls {
  display: flex;
  align-items: flex-start;
  justify-content: space-between;
}

.search {
  width: 384px;
  height: 40px;
  padding-left: 25px;
  display: flex;
  align-items: center;
  gap: 12px;
  border-radius: 5px;
  background-color: white;
  box-shadow: 0 2px 9px rgba(0, 0, 0, 0.08);
  font-family: Roboto, sans-serif;
  font-size: 13.300px;
  color: #6b6b6b;
}

.filter {
  width: 288px;
  height: 39px;
  padding: 0 21px 2px 20px;
  display: flex;
  align-items: center;
  justify-content: space-between;
  border-radius: 5px;
  background-color: white;
  box-shadow: 0 2px 9px rgba(0, 0, 0, 0.08);
  font-family: Roboto, sans-serif;
  font-size: 13.800px;
  color: #555;
}

.filter svg {
  margin-top: 2px;
}

.country-grid {
  margin-top: 32px;
  display: grid;
  grid-template-columns: repeat(4, 1fr);
  gap: 64px;
}

.card {
  height: 326px;
  border-radius: 5px;
  overflow: hidden;
  background-color: white;
  box-shadow: 0 10px 16px rgba(0, 0, 0, 0.4);
}

.flag {
  display: block;
  width: 100%;
  height: 160px;
}

.card-body {
  padding: 18px 32px 28px;
  font-size: 14.500px;
  color: #444;
}

.card-body h2 {
  margin: 0 0 16px;
  line-height: 20px;
  font-size: 14px;
  font-weight: 700;
  color: #111517;
}

.card-body p {
  margin: 0;
  line-height: 28px;
}

.card-body b {
  font-weight: 500;
  color: #111517;
}

/* scrollbar */
.scrollbar {
  width: 17px;
  padding: 6px 0;
  display: flex;
  flex-direction: column;
  align-items: center;
  background-color: #f1f1f1;
}

.arrow-up,
.arrow-down {
  width: 0;
  height: 0;
  border-left: 4px solid transparent;
  border-right: 4px solid transparent;
}

.arrow-up {
  border-bottom: 5px solid #505050;
}

.arrow-down {
  margin-top: auto;
  border-top: 5px solid #505050;
}

.scroll-thumb {
  width: 15px;
  height: 18px;
  margin-top: 6px;
  background-color: #c1c1c1;
}

/* windows taskbar */
.taskbar {
  height: 40px;
  flex: none;
  display: flex;
  align-items: stretch;
  background-color: #1b1b1b;
}

.start {
  width: 48px;
  flex: none;
  display: flex;
  align-items: center;
  justify-content: center;
}

.task-search {
  width: 288px;
  padding: 0 0 2px 12px;
  flex: none;
  display: flex;
  align-items: center;
  gap: 9px;
  border: 1px solid #a0a0a0;
  border-bottom: none;
  background-color: #f0f0f0;
  font-size: 13.900px;
  color: #222;
}

.task-view {
  width: 48px;
  flex: none;
  display: flex;
  align-items: center;
  justify-content: center;
}

.task-app {
  width: 49px;
  flex: none;
  display: flex;
  align-items: center;
  justify-content: center;
  position: relative;
}

.task-view + .task-app {
  margin-left: 3px;
}

.running::after {
  content: "";
  position: absolute;
  left: 5px;
  right: 5px;
  bottom: 0;
  height: 2px;
  background-color: #76b9ed;
}

.running-active {
  background-color: #4a4a4a;
}

.running-active::after {
  content: "";
  position: absolute;
  left: 0;
  right: 0;
  bottom: 0;
  height: 2px;
  background-color: #76b9ed;
}

.profile-badge {
  width: 16px;
  height: 16px;
  position: absolute;
  left: 22px;
  top: 19px;
  border-radius: 50%;
  text-align: center;
  line-height: 16px;
  font-size: 9px;
  color: #e8e0f5;
  background-color: #7b54c0;
}

.tray {
  flex: 1;
  display: flex;
  align-items: center;
  font-family: "Liberation Sans", Arial, sans-serif;
  color: #eee;
}

.tray-weather {
  margin-left: 148px;
  flex: none;
}

.tray-temp {
  width: 30px;
  margin-left: 7px;
  flex: none;
  font-size: 13.500px;
}

.tray-weather-text {
  width: 58px;
  margin-left: 9px;
  flex: none;
  white-space: nowrap;
  font-size: 13.500px;
}

.tray-caret {
  margin-left: 25px;
  flex: none;
}

.tray-icon {
  flex: none;
}

.tray-cam {
  margin-left: 13px;
}

.tray-batt {
  margin-left: 7px;
}

.tray-wifi {
  margin-left: 11px;
}

.tray-sound {
  margin-left: 5px;
}

.tray-clock {
  width: 60px;
  margin: -2px 0 0 7px;
  flex: none;
  display: flex;
  flex-direction: column;
  align-items: center;
  line-height: 19px;
  font-size: 11.600px;
}

.tray-notify {
  margin-left: 18px;
  flex: none;
}

.show-desktop {
  width: 1px;
  height: 40px;
  margin-left: 18px;
  flex: none;
  background-color: #555;
}
```
